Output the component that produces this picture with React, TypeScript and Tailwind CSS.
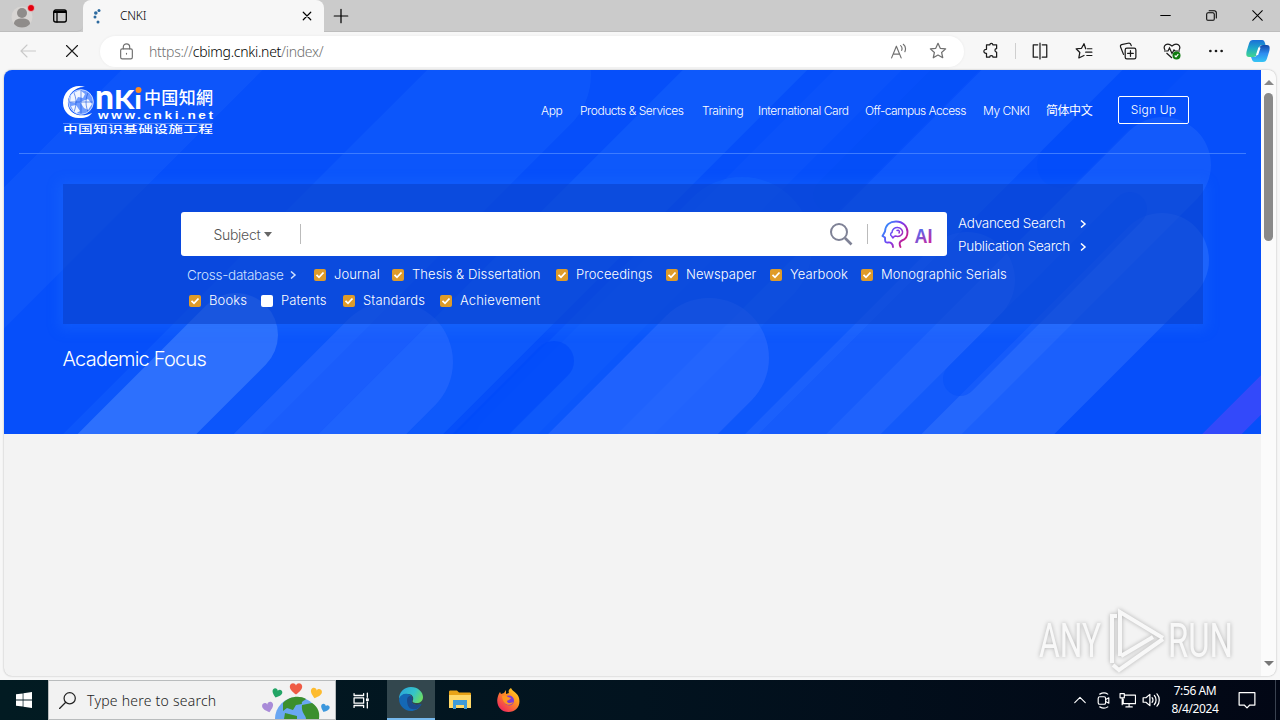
import type { ReactNode } from 'react';
import { clsx } from 'clsx';

interface IconProps {
  children: ReactNode;
  className?: string;
  size?: number;
  stroke?: number;
}

function Icon({ children, className, size = 16, stroke = 1.1 }: IconProps) {
  return (
    <svg
      width={size}
      height={size}
      viewBox="0 0 16 16"
      fill="none"
      stroke="currentColor"
      strokeWidth={stroke}
      strokeLinecap="round"
      strokeLinejoin="round"
      className={clsx('shrink-0', className)}
    >
      {children}
    </svg>
  );
}

function TabStrip() {
  return (
    <div className="flex h-8 bg-[#cbcbcb]">
      <div className="flex w-[83px] items-center border-b border-[#bdbdbd] rounded-br-md">
        <svg width="26" height="28" viewBox="0 0 26 28" className="ml-[11px] shrink-0">
          <circle cx="11" cy="15" r="10.5" fill="#d8d5d3" />
          <circle cx="11" cy="11" r="5" fill="#8f8c8a" />
          <path d="M3 22c0-4 3-5.5 8-5.5s8 1.500 8 5.500c-2 2.500-5 3.500-8 3.500S5 24.500 3 22z" fill="#8f8c8a" />
          <circle cx="20" cy="6" r="3.500" fill="#e3000f" stroke="#e8e8e8" strokeWidth=".6" />
        </svg>
        <Icon className="ml-[15px] text-black" stroke={1.3}>
          <rect x="1.700" y="2" width="12.600" height="12" rx="2" />
          <path d="M2 4.300h12M2.500 3.300h11" />
          <path d="M5 5v9" />
        </Icon>
      </div>
      <div className="flex w-[241px] items-center rounded-t-lg bg-[#f7f7f7]">
        <svg width="12" height="16" viewBox="0 0 12 16" className="ml-[9px]">
          <g fill="#2d6a9f">
            <circle cx="7" cy="2.500" r="1.500" />
            <circle cx="3.800" cy="5" r="1.800" />
            <circle cx="3" cy="9" r="1.500" />
            <circle cx="6" cy="14" r="1.500" />
          </g>
        </svg>
        <span className="ml-[16px] font-['Noto_Sans'] text-[12px] font-light tracking-[-0.2px] text-black">CNKI</span>
        <Icon className="ml-auto mr-[11px] text-black" size={12} stroke={1.6}>
          <path d="M3 3l10 10M13 3L3 13" />
        </Icon>
      </div>
      <div className="flex flex-1 items-center border-b border-[#bdbdbd] text-black">
        <Icon className="ml-[8px]" size={18}>
          <path d="M8 2v12M2 8h12" />
        </Icon>
        <div className="ml-auto mr-[17px] flex items-center gap-[35px]">
          <Icon size={11} stroke={1.5}>
            <path d="M1 8h14" />
          </Icon>
          <Icon size={11} stroke={1.5}>
            <rect x="1" y="4" width="11" height="11" rx="2" />
            <path d="M4.500 1.200h7.500a3 3 0 0 1 3 3v7.300" />
          </Icon>
          <Icon size={11} stroke={1.5}>
            <path d="M1 1l14 14M15 1L1 15" />
          </Icon>
        </div>
      </div>
    </div>
  );
}

function CopilotLogo() {
  return (
    <svg width="24" height="24" viewBox="0 0 24 24" className="shrink-0">
      <defs>
        <linearGradient id="cpA" x1="0" y1="0" x2="0" y2="1">
          <stop offset="0" stopColor="#1a6fd8" />
          <stop offset="0.500" stopColor="#1fa9c9" />
          <stop offset="1" stopColor="#42d68c" />
        </linearGradient>
        <linearGradient id="cpB" x1="0" y1="0" x2="0" y2="1">
          <stop offset="0" stopColor="#1248a8" />
          <stop offset="0.500" stopColor="#2f8df0" />
          <stop offset="1" stopColor="#36c5f4" />
        </linearGradient>
      </defs>
      <path d="M7 1h9c2 0 2.500 1.500 3 3l.5 2h-3c-2 0-3 1-3.500 3l-2 6c-.7 2-1.500 3-3.500 3H3C0 18 0 15 .7 12L3 4.500C3.700 2 5 1 7 1z" fill="url(#cpA)" />
      <path d="M17 23H9c-2 0-2.800-1.500-3.300-3.200L5 18h3c2 0 3-1.500 3.500-3l2-6c.6-2 1.500-3 3.500-3h4c3 0 3 3 2.300 6L21 19.500c-.7 2.500-2 3.500-4 3.500z" fill="url(#cpB)" />
      <path d="M13.500 8.500L11 16" stroke="#fff" strokeWidth="2.200" />
    </svg>
  );
}

function Toolbar() {
  return (
    <div className="flex h-[38px] items-center bg-[#f7f7f7] text-[#1a1a1a]">
      <Icon className="ml-[20px] text-[#c9c9c9]">
        <path d="M15.500 8H1M7 2L1 8l6 6" />
      </Icon>
      <Icon className="ml-[28px]" stroke={1.1}>
        <path d="M2.500 2.500l11 11M13.500 2.500l-11 11" />
      </Icon>
      <div className="ml-[20px] flex h-[31px] w-[864px] items-center rounded-full bg-white text-[#707070] shadow-[0_0_3px_rgba(0,0,0,0.06)]">
        <Icon className="ml-[18px]" size={17}>
          <rect x="2.500" y="5.500" width="11" height="9.500" rx="1.500" />
          <path d="M5 5.500V3.800a3 3 0 0 1 6 0v1.700M8 9.800v.6" />
        </Icon>
        <span className="ml-[14px] font-['Noto_Sans'] text-[14px] font-light tracking-[-0.27px] whitespace-nowrap">
          https://<span className="text-black">cbimg.cnki.net</span>/index/
        </span>
        <Icon className="ml-auto" size={17}>
          <path d="M1.500 14L6 3l4.500 11M3 10.500h6M10 2.500c1.300 1 1.500 3 1 4.500M12.500 1.200c2.200 1.800 2.500 4.500 1.500 7" />
        </Icon>
        <Icon className="ml-[22px] mr-[17px]" size={18}>
          <path d="M8 1.200l2 4.400 4.800.5-3.600 3.200 1 4.700L8 11.600 3.800 14l1-4.700L1.200 6.100 6 5.600z" />
        </Icon>
      </div>
      <Icon className="ml-[18px]" size={18}>
        <path d="M4 2.500h3c0-1.800 2.600-1.800 2.600 0H13v3.300c-2 0-2 3.200 0 3.200v4.500H9.800c0-1.800-3-1.800-3 0H4V10C1 10.500.8 6.300 4 6.500z" />
      </Icon>
      <div className="ml-[15px] h-[16px] w-px bg-[#cfcfcf]" />
      <div className="ml-[15px] flex items-center gap-[26px]">
        <Icon size={18}>
          <path d="M6 2.500H2v11h4M10 2.500h4v11h-4M8 1v14" />
        </Icon>
        <Icon size={18}>
          <path d="M9.500 6L8 1.500 5.800 5.600 1 6l3.300 3.300-.9 4.900L8 12M11 6h4M9.500 9H15M10.500 12H15" />
        </Icon>
        <Icon size={18}>
          <rect x="5.500" y="5.500" width="9.500" height="9.500" rx="1.500" />
          <path d="M10.200 7.700v5M7.700 10.200h5M4 11L1.300 4.300c-.3-1 .2-1.600 1-1.900L9 .9c1 0 1.500.6 1.900 2.300" />
        </Icon>
        <svg width="18" height="18" viewBox="0 0 18 18" fill="none" stroke="currentColor" strokeWidth="1.200">
          <path d="M2 8C-.5 4 4-.5 9 4c5-4.500 9.500 0 7 4M1 9h4l1.500-3L9 11.500 11 8l1 1h5M3.500 11L9 16" />
          <circle cx="13.500" cy="13.500" r="4" fill="#107c10" stroke="none" />
          <path d="M11.700 13.500l1.300 1.300 2.300-2.600" stroke="#fff" />
        </svg>
        <Icon size={18}>
          <g fill="currentColor" stroke="none">
            <circle cx="3" cy="8" r="1.200" />
            <circle cx="8" cy="8" r="1.200" />
            <circle cx="13" cy="8" r="1.200" />
          </g>
        </Icon>
      </div>
      <div className="ml-[21px]">
        <CopilotLogo />
      </div>
    </div>
  );
}

interface Pill {
  from: [number, number];
  len: number;
  r: number;
  fill: string;
}

// Capsules run at 45 degrees; a negative length goes down and to the left.
const PILLS: Pill[] = [
  { from: [-100, 362], len: 500, r: 50, fill: 'rgba(50,120,255,0.16)' },
  { from: [521, 75], len: -700, r: 70, fill: 'rgba(40,115,255,0.2)' },
  { from: [300, 515], len: 700, r: 44, fill: 'rgba(40,120,255,0.26)' },
  { from: [742, 247], len: -600, r: 70, fill: 'rgba(30,115,255,0.22)' },
  { from: [500, 622], len: 700, r: 50, fill: 'rgba(50,120,255,0.2)' },
  { from: [500, 438], len: 700, r: 24, fill: 'rgba(50,120,255,0.1)' },
  { from: [830, 195], len: 300, r: 17, fill: 'rgba(0,74,245,0.25)' },
  { from: [1060, 165], len: 200, r: 23, fill: 'rgba(0,74,248,0.35)' },
  { from: [1163, 165], len: -500, r: 48, fill: 'rgba(60,125,255,0.25)' },
  { from: [236, 335], len: -300, r: 42, fill: 'rgba(90,145,255,0.43)' },
  { from: [392, 362], len: -300, r: 61, fill: 'rgba(50,110,255,0.45)' },
  { from: [554, 361], len: -200, r: 20, fill: 'rgba(0,74,250,0.7)' },
  { from: [709, 358], len: -300, r: 60, fill: 'rgba(50,110,255,0.55)' },
  { from: [967, 280], len: -400, r: 48, fill: 'rgba(60,120,255,0.3)' },
  { from: [1162, 260], len: -400, r: 47, fill: 'rgba(70,130,255,0.35)' },
  { from: [960, 379], len: 170, r: 17, fill: 'rgba(5,80,250,0.5)' },
  { from: [1330, 326], len: -400, r: 14, fill: 'rgba(90,70,250,0.55)' },
];

function HeroBackground() {
  return (
    <svg
      width="1257"
      height="364"
      viewBox="4 70 1257 364"
      fill="none"
      strokeLinecap="round"
      className="absolute inset-0"
    >
      <rect x="4" y="70" width="1257" height="364" fill="#064ffa" />
      {PILLS.map((p, i) => (
        <path
          key={i}
          d={`M${p.from[0]} ${p.from[1]}l${p.len} ${-p.len}`}
          stroke={p.fill}
          strokeWidth={p.r * 2}
        />
      ))}
    </svg>
  );
}

function CnkiLogo() {
  return (
    <svg width="154" height="54" viewBox="0 0 154 54" fill="#fff">
      <defs>
        <clipPath id="globe">
          <circle cx="18" cy="17" r="12" />
        </clipPath>
      </defs>
      <path d="M22 2C11-2 0 6 0 18c0 10 9 16 17 15 6 0 10-2 12-5-10 5-23 2-24-9C4 9 13 1 22 2z" />
      <circle cx="18" cy="17" r="12.500" fill="#6f9cff" />
      <g clipPath="url(#globe)">
        <path d="M8 9l9-4 5 4-2 4-5-1-3 6-5-1zM17 17l8-3 4 5-4 6-4-2zM8 21l5-1 4 6-5 3z" opacity=".9" />
        <path d="M6 17h25M18 4v26M10 6c4 7 4 15 0 23M26 6c-4 7-4 15 0 23" fill="none" stroke="#1554e0" strokeWidth=".6" />
      </g>
      <circle cx="18" cy="17" r="12.300" fill="none" stroke="#dbe6ff" strokeWidth=".8" />
      <g fontFamily="Lato, sans-serif" fontWeight="900">
        <text x="32" y="24" fontSize="35" textLength="19" lengthAdjust="spacingAndGlyphs">n</text>
        <text x="51" y="24" fontSize="26" textLength="28" lengthAdjust="spacingAndGlyphs">Kı</text>
      </g>
      <circle cx="75.500" cy="5" r="3" fill="#ff8a1f" />
      <text x="81" y="18.500" fontFamily="'Noto Sans CJK SC', sans-serif" fontWeight="500" fontSize="17" textLength="69">
        中国知網
      </text>
      <g transform="translate(35 34) scale(1.300 1)">
        <text fontFamily="'Liberation Sans'" fontWeight="700" fontSize="10.500" textLength="88.500">
          www.cnki.net
        </text>
      </g>
      <path d="M0 38.500h150" stroke="#6b9aff" strokeWidth=".7" />
      <g transform="translate(0 48) scale(1.500 1)">
        <text fontFamily="'Noto Sans CJK SC', sans-serif" fontWeight="500" fontSize="9.800" textLength="100">
          中国知识基础设施工程
        </text>
      </g>
    </svg>
  );
}

const NAV = [
  { label: 'App', width: 'w-[39px]' },
  { label: 'Products & Services', width: 'w-[122px]' },
  { label: 'Training', width: 'w-[56px]' },
  { label: 'International Card', width: 'w-[107px]' },
  { label: 'Off-campus Access', width: 'w-[118px] tracking-[-0.58px]' },
  { label: 'My CNKI', width: 'w-[63px]' },
  { label: '简体中文', width: 'w-[72px] font-normal' },
];

function SiteHeader() {
  return (
    <header className="relative mx-[15px] flex h-[84px] border-b border-[#3d7cff]">
      <div className="ml-[44px] mt-[15px]">
        <CnkiLogo />
      </div>
      <nav className="ml-auto mr-[57px] flex h-[82px] items-center text-[12px] tracking-[-0.45px]">
        {NAV.map((item) => (
          <a key={item.label} className={clsx('whitespace-nowrap', item.width)}>
            {item.label}
          </a>
        ))}
        <a className="mb-[2px] flex h-[28px] w-[71px] items-center justify-center rounded-[2px] border border-white text-[12px] tracking-[0.2px]">
          Sign Up
        </a>
      </nav>
    </header>
  );
}

function Chevron() {
  return (
    <svg width="7" height="8" viewBox="0 0 7 8" fill="none" stroke="currentColor" strokeWidth="1.500">
      <path d="M1 .5L5 4 1 7.500" />
    </svg>
  );
}

function AiLogo() {
  return (
    <svg width="54" height="28" viewBox="0 0 54 28" fill="none">
      <defs>
        <linearGradient id="ai" gradientUnits="userSpaceOnUse" x1="0" y1="4" x2="28" y2="22">
          <stop offset="0" stopColor="#1aa6ff" />
          <stop offset="0.500" stopColor="#7a3cf0" />
          <stop offset="1" stopColor="#e0106a" />
        </linearGradient>
        <linearGradient id="aiText" gradientUnits="userSpaceOnUse" x1="35" y1="8" x2="50" y2="24">
          <stop offset="0" stopColor="#3c7bff" />
          <stop offset="1" stopColor="#d0209a" />
        </linearGradient>
      </defs>
      <g stroke="url(#ai)" strokeWidth="1.900" strokeLinecap="round" strokeLinejoin="round">
        <path d="M12 27c0-3-2-5-5-4.500-3 .5-3-1-3-5L1.500 16 4 11.500C4.500 5 9 1.500 15 1.500c7 0 11.500 5 11.500 10.500 0 5-2.500 7.500-5.500 8.500-2.500 1-3 3-1.500 6.500" />
        <path d="M10.500 16c-1.500-1-1-3 .5-3.500 0-3 3-5.500 6-5 3 .3 5 3 4.500 5.500-.7 3-4 4-7 3-1.500 0-2 1-2.500 2zM16 10.500c2-1 3 1 2 2.500" strokeWidth="1.500" />
      </g>
      <text x="33.500" y="23" fontFamily="'Liberation Sans'" fontWeight="700" fontSize="20" textLength="18" lengthAdjust="spacingAndGlyphs" fill="url(#aiText)">
        AI
      </text>
    </svg>
  );
}

interface Database {
  label: string;
  width: string;
  unchecked?: boolean;
}

const FIRST_ROW: Database[] = [
  { label: 'Journal', width: 'w-[78px]' },
  { label: 'Thesis & Dissertation', width: 'w-[164px]' },
  { label: 'Proceedings', width: 'w-[110px]' },
  { label: 'Newspaper', width: 'w-[104px]' },
  { label: 'Yearbook', width: 'w-[91px]' },
  { label: 'Monographic Serials', width: 'w-[150px]' },
];

const SECOND_ROW: Database[] = [
  { label: 'Books', width: 'w-[72px]' },
  { label: 'Patents', width: 'w-[82px]', unchecked: true },
  { label: 'Standards', width: 'w-[97px]' },
  { label: 'Achievement', width: 'w-[110px]' },
];

function DatabaseOption({ label, width, unchecked }: Database) {
  return (
    <label className={clsx('flex items-center whitespace-nowrap', width)}>
      <span
        className={clsx(
          'flex size-[12px] shrink-0 items-center justify-center rounded-[2px]',
          unchecked ? 'bg-white' : 'bg-[#df9b29]',
        )}
      >
        {!unchecked && (
          <svg width="10" height="10" viewBox="0 0 10 10" fill="none" stroke="#fff" strokeWidth="1.800">
            <path d="M1.500 4.800l2.500 2.500 4.500-4.800" />
          </svg>
        )}
      </span>
      <span className="ml-[8px]">{label}</span>
    </label>
  );
}

function SearchPanel() {
  return (
    <div className="relative mx-[59px] mt-[30px] h-[140px] w-[1140px] bg-[#0b45cc]/60 pt-[28px] shadow-[0_2px_12px_4px_rgba(40,125,255,0.24)]">
      <div className="flex">
        <div className="ml-[118px] flex h-[44px] w-[766px] items-center rounded-[3px] bg-white">
          <div className="flex w-[119px] items-center pl-[32.500px] text-[14px] tracking-[-0.3px] text-[#555]">
            Subject
            <span className="ml-[4px] h-0 w-0 border-x-[4.500px] border-t-[5px] border-x-transparent border-t-[#666]" />
          </div>
          <div className="h-[20px] w-px bg-[#bbb]" />
          <svg width="24" height="24" viewBox="0 0 24 24" fill="none" stroke="#7f8296" strokeWidth="2" className="ml-auto mr-[14px]">
            <circle cx="10" cy="10" r="8" />
            <path d="M16 16l6.500 6.500" strokeWidth="2.600" />
          </svg>
          <div className="h-[20px] w-px bg-[#bbb]" />
          <div className="ml-[13px] mr-[12px]">
            <AiLogo />
          </div>
        </div>
        <div className="ml-[11px] w-[129px] text-[13.500px] leading-[23px] tracking-[-0.27px]">
          {['Advanced Search', 'Publication Search'].map((label) => (
            <a key={label} className="flex items-center justify-between whitespace-nowrap">
              {label}
              <Chevron />
            </a>
          ))}
        </div>
      </div>
      <div className="ml-[124px] mt-[4px] flex h-[26px] items-center text-[13px] tracking-[0.08px]">
        <a className="flex w-[127px] items-center gap-[6px] whitespace-nowrap text-[13.500px] tracking-[-0.25px] text-[#cfe0ff]">
          Cross-database
          <Chevron />
        </a>
        {FIRST_ROW.map((db) => (
          <DatabaseOption key={db.label} {...db} />
        ))}
      </div>
      <div className="ml-[126px] flex h-[26px] items-center text-[13px] tracking-[0.14px]">
        {SECOND_ROW.map((db) => (
          <DatabaseOption key={db.label} {...db} />
        ))}
      </div>
    </div>
  );
}

function Scrollbar() {
  return (
    <div className="flex w-[15px] flex-col items-center rounded-r-lg bg-[#fbfbfb] py-[10px]">
      <span className="h-0 w-0 border-x-[5px] border-b-[5px] border-x-transparent border-b-[#888]" />
      <span className="mt-[8px] h-[148px] w-[9px] rounded-full bg-[#8a8a8a]" />
      <span className="mt-auto h-0 w-0 border-x-[5px] border-t-[5px] border-x-transparent border-t-[#777]" />
    </div>
  );
}

function Watermark() {
  return (
    <svg
      width="210"
      height="68"
      viewBox="0 0 210 68"
      className="absolute right-[33px] bottom-px drop-shadow-[0_0_2px_rgba(0,0,0,0.28)]"
    >
      <g fontFamily="Roboto" fontSize="48" fill="#f8f8f8">
        <text x="6" y="50" textLength="62" lengthAdjust="spacingAndGlyphs">ANY</text>
        <text x="135" y="50" textLength="65" lengthAdjust="spacingAndGlyphs">RUN</text>
      </g>
      <path d="M79 56V9h5M87 49V5l43 26M88 49l32-19M80 58l6 5 44-31" fill="none" stroke="#f8f8f8" strokeWidth="4" />
    </svg>
  );
}

function Page() {
  return (
    <main className="flex h-[610px] bg-[#f7f7f7] pl-[4px] pr-[4px] pb-[4px]">
      <div className="relative flex flex-1 overflow-hidden rounded-lg bg-[#f3f3f3] shadow-[0_0_2px_rgba(0,0,0,0.3)]">
        <div className="w-[1257px]">
          <section className="relative h-[364px] overflow-hidden font-['Inter','Noto_Sans_CJK_SC',sans-serif] font-light text-white">
            <HeroBackground />
            <SiteHeader />
            <SearchPanel />
            <h2 className="relative ml-[58.500px] mt-[20px] text-[20px] leading-[30px] tracking-[-0.78px]">Academic Focus</h2>
          </section>
        </div>
        <Scrollbar />
        <Watermark />
      </div>
    </main>
  );
}

function SearchEarth() {
  const heart = 'M0 6C-4 3-7 0-6-3-5-6-1-6 0-3 1-6 5-6 6-3 7 0 4 3 0 6z';
  return (
    <svg width="72" height="38" viewBox="0 0 72 38">
      <circle cx="37" cy="38" r="22" fill="#6aa7f2" />
      <path d="M23 22c6-7 17-8 23-4-2 2-5 2-4 5l-6 1-3 5-6-2-4 3zM42 24l10-2c6 4 8 9 7 16H46c0-4-5-6-4-14zM25 32l12 3v3H24z" fill="#3c8f2d" />
      <path d={heart} transform="translate(36 7.500)" fill="#ef5b45" />
      <path d={heart} transform="translate(17 12) rotate(18) scale(.8)" fill="#23a566" />
      <path d={heart} transform="translate(56 12) rotate(15) scale(.9)" fill="#fdbb2e" />
      <path d={heart} transform="translate(8 26) rotate(-15) scale(.9)" fill="#a98bd8" />
      <path d={heart} transform="translate(65 27) rotate(20) scale(.7)" fill="#3b97dd" />
    </svg>
  );
}

function Taskbar() {
  return (
    <footer className="flex h-[40px] items-center bg-linear-to-r from-[#021b22] via-[#02131f] to-[#020715] text-white">
      <div className="flex w-[48px] justify-center">
        <svg width="16" height="16" viewBox="0 0 16 16" fill="#fff">
          <path d="M0 2.300l6.700-.9v6.200H0zM7.400 1.300L16 0v7.600H7.400zM0 8.400h6.700v6.200L0 13.700zM7.400 8.400H16V16l-8.600-1.300z" />
        </svg>
      </div>
      <div className="flex h-[40px] w-[288px] items-center border border-[#b9bcbd] bg-[#f2f2f2] text-[#222]">
        <Icon className="ml-[10px]" size={18}>
          <circle cx="9.500" cy="6.500" r="5" />
          <path d="M6 10l-5.500 5.500" />
        </Icon>
        <span className="ml-[10px] font-['Noto_Sans'] text-[14px] font-light tracking-[0.24px] whitespace-nowrap">
          Type here to search
        </span>
        <div className="ml-auto mr-[3px]">
          <SearchEarth />
        </div>
      </div>
      <div className="flex w-[50px] justify-center">
        <Icon size={17} stroke={1.2}>
          <path d="M1 1.500v1.800h9V1.500M1 14.500v-1.800h9v1.800M13.500 1v4M13.500 9.500V15" />
          <rect x="1" y="5.500" width="9" height="5" />
          <path d="M12.800 6.500h1.500v1.500h-1.500z" />
        </Icon>
      </div>
      <div className="ml-px flex h-[40px] w-[48px] items-center justify-center border-b-2 border-[#76b9ed] bg-[#33474e]">
        <svg width="24" height="24" viewBox="0 0 24 24">
          <defs>
            <linearGradient id="edge" x1="0" y1=".2" x2="1" y2=".6">
              <stop offset="0" stopColor="#2aa5dc" />
              <stop offset=".6" stopColor="#35c4c8" />
              <stop offset="1" stopColor="#6bdc65" />
            </linearGradient>
          </defs>
          <path d="M0 12C0 5 5 0 12 0s12 5 12 10c0 4-3 6-6 6-4 0-5-1-4-3 1-3-1-6-5-6-5 0-8 3-9 5z" fill="url(#edge)" />
          <path d="M0 12c1-4 5-6 9-5 3 1 5 3 4 6-1 1 0 5 5 5 2 0 3-1 4.500-1C20 22 16 24 12 24 5 24 0 18 0 12z" fill="#1468b5" />
          <path d="M8 13c0-3 2-4 3-4 2 0 3 2 2 4-1 1 0 5 5 5 2 0 3-1 4.500-1-2 4-5 6-9 5-4 0-5.500-5-5.500-9z" fill="#1b4a8c" />
        </svg>
      </div>
      <div className="flex w-[49px] justify-center">
        <svg width="22" height="20" viewBox="0 0 22 20">
          <path d="M0 2c0-1 .5-1.500 1.500-1.500H8l2 2h10.500c1 0 1.500.5 1.500 1.500v14H0z" fill="#e8a317" />
          <path d="M0 5h22v13H0z" fill="#ffd868" />
          <path d="M4 10h14v9h-3v-4H7v4H4z" fill="#3e9ad8" />
        </svg>
      </div>
      <div className="flex w-[49px] justify-center">
        <svg width="23" height="24" viewBox="0 0 23 24">
          <defs>
            <linearGradient id="fox" x1="1" y1="0" x2="0.200" y2="1">
              <stop offset="0" stopColor="#ffe226" />
              <stop offset=".4" stopColor="#ff9a1f" />
              <stop offset="1" stopColor="#f0225f" />
            </linearGradient>
          </defs>
          <path d="M3 4l1 2 3-1 2-3v4l3-1c-1-2 0-4 2-5 1 3 7 5 8 10 2 8-3 14-10.500 14S-1 18 .5 10c.5-2 1-4 2.500-6z" fill="url(#fox)" />
          <circle cx="12" cy="12.500" r="5" fill="#7a3bd6" />
          <path d="M5 8c3-1 5 0 6 1l3 1c-1 2-3 2-4 3 0 2 3 3 6 1-1 4-10 5-11-6z" fill="#ff961f" />
        </svg>
      </div>
      <div className="ml-auto flex items-center">
        <Icon size={14} stroke={1.3}>
          <path d="M2 11l6-6 6 6" />
        </Icon>
        <Icon className="ml-[8px]" size={17}>
          <rect x="3" y="4.500" width="7" height="7" rx="1.500" />
          <path d="M10 7l3-1.500v5L10 9M4.500 2C7 .5 10 .5 12 2M4.500 14c2.500 1.500 5.500 1.500 7.500 0" />
        </Icon>
        <Icon className="ml-[7px]" size={17}>
          <path d="M5 3h10.500v8H4V7M1 1.500h4v4H1zM3 5.500V12M9.500 11v3M6.500 14h6" />
        </Icon>
        <Icon className="ml-[6px]" size={18}>
          <path d="M1 6h2.500L7 3v10l-3.500-3H1zM9 6c1 1 1 3 0 4M11 4c2 2 2 6 0 8M13.300 2.500c2.700 3 2.700 8 0 11" />
        </Icon>
        <div className="ml-[7px] w-[56px] text-center font-['Noto_Sans'] text-[12px] leading-[18px] tracking-[-0.4px] whitespace-nowrap">
          <div>7:56 AM</div>
          <div>8/4/2024</div>
        </div>
        <Icon className="ml-[15px]" size={18}>
          <path d="M1 1.500h14v11h-4.500L8 15l-2.500-2.500H1z" />
        </Icon>
        <div className="ml-[19px] mr-[4px] h-[40px] w-px bg-[#3a4250]" />
      </div>
    </footer>
  );
}

export default function App() {
  return (
    <div className="h-[720px] w-[1280px] overflow-hidden">
      <TabStrip />
      <Toolbar />
      <Page />
      <Taskbar />
    </div>
  );
}
